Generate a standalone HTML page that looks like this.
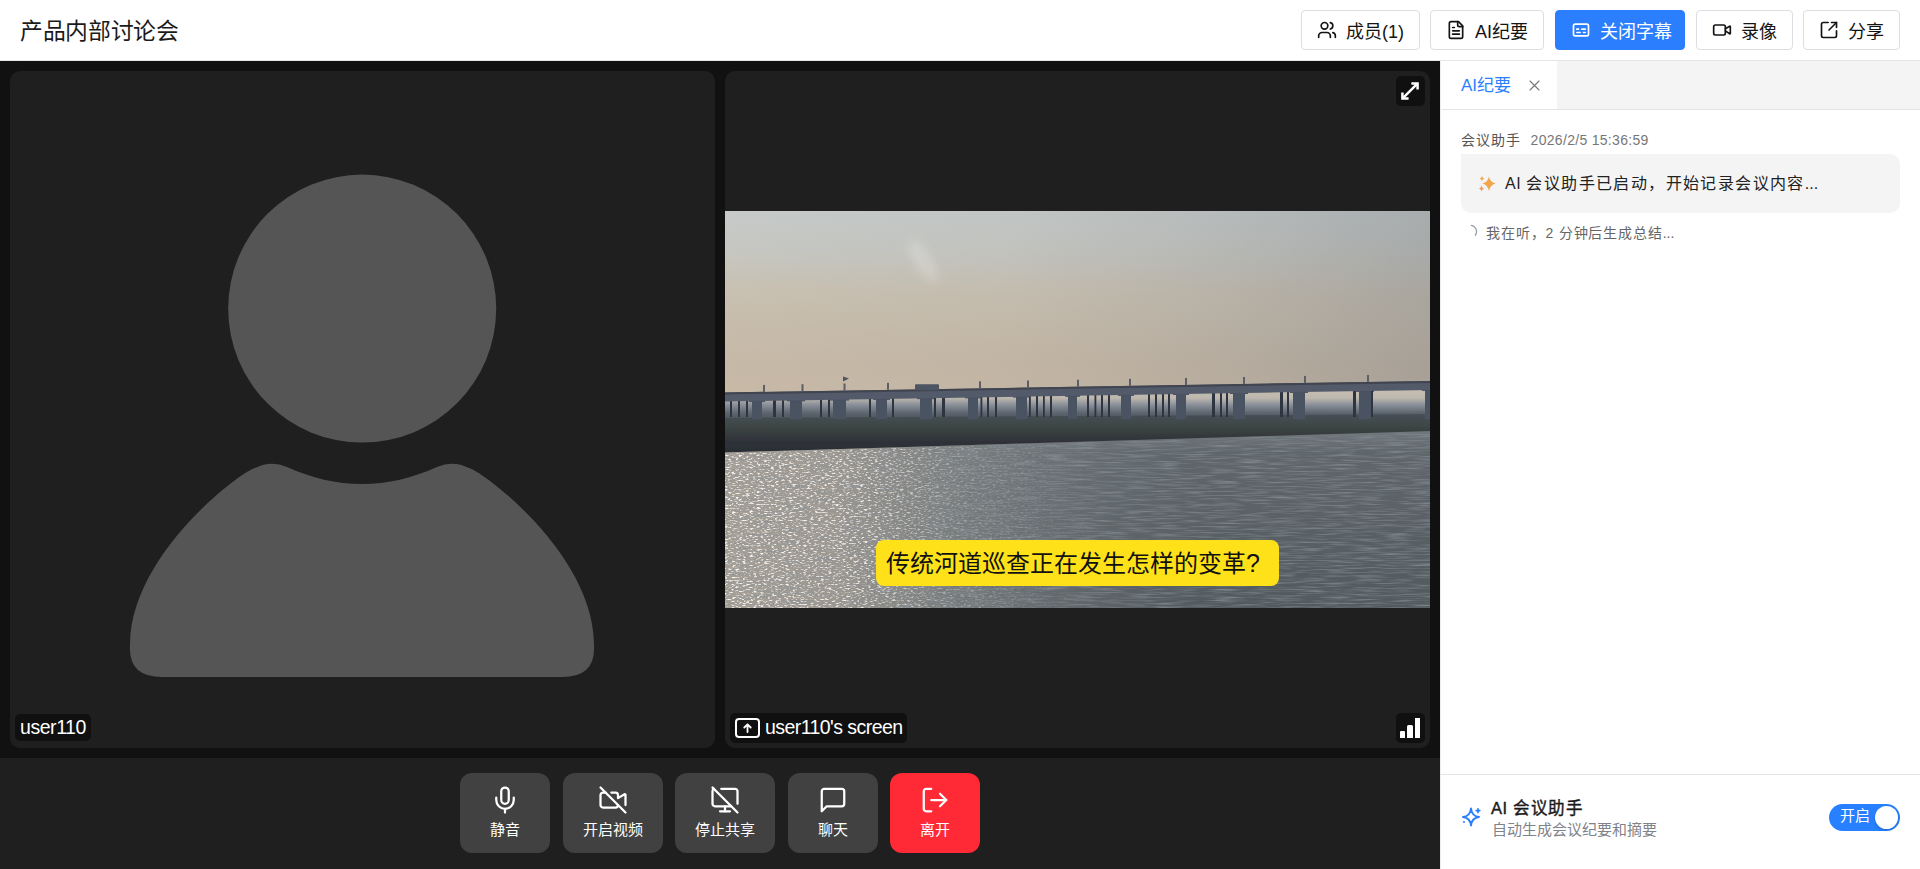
<!DOCTYPE html>
<html lang="zh-CN"><head><meta charset="utf-8">
<style>
*{box-sizing:border-box;margin:0;padding:0}
html,body{width:1920px;height:869px;overflow:hidden;background:#fff;font-family:"Liberation Sans",sans-serif}
.abs{position:absolute}
#header{left:0;top:0;width:1920px;height:61px;background:#fff;border-bottom:1px solid #e6e6ea}
#title{left:20px;top:15px;letter-spacing:-0.35px;font-size:22.8px;color:#1a1a1a;line-height:32px;white-space:nowrap}
.hbtn{top:10px;height:40px;border:1px solid #dddde3;border-radius:4px;background:#fff;color:#141414;font-size:18px;display:flex;align-items:center;padding:0 15px;white-space:nowrap}
.hbtn span{position:relative;top:0}
.hbtn svg{width:20px;height:20px;margin-right:9px;flex:none}
.hbtn.blue{background:#2b7fff;border-color:#2b7fff;color:#fff}
#main{left:0;top:61px;width:1440px;height:697px;background:#111}
.tile{top:71px;width:705px;height:677px;background:#1f1f1f;border-radius:10px;overflow:hidden}
#ctrl{left:0;top:758px;width:1440px;height:111px;background:#1f1f1f}
.cbtn{top:773px;height:80px;border-radius:12px;background:#414141;color:#fff;font-size:15px;text-align:center}
.cbtn svg{position:absolute;left:50%;top:12px;width:30px;height:30px;margin-left:-15px}
.cbtn span{position:absolute;left:0;right:0;top:48px;line-height:18px}
#side{left:1440px;top:61px;width:480px;height:808px;background:#fff}
</style></head><body>
<div id="header" class="abs"></div>
<div id="title" class="abs">产品内部讨论会</div>

<div class="hbtn abs" style="left:1301px;width:119px">
<svg viewBox="0 0 24 24" fill="none" stroke="#141414" stroke-width="2" stroke-linecap="round" stroke-linejoin="round"><path d="M16 21v-2a4 4 0 0 0-4-4H6a4 4 0 0 0-4 4v2"/><circle cx="9" cy="7" r="4"/><path d="M22 21v-2a4 4 0 0 0-3-3.87"/><path d="M16 3.13a4 4 0 0 1 0 7.75"/></svg><span>成员(1)</span></div>
<div class="hbtn abs" style="left:1430px;width:114px">
<svg viewBox="0 0 24 24" fill="none" stroke="#141414" stroke-width="2" stroke-linecap="round" stroke-linejoin="round"><path d="M15 2H6a2 2 0 0 0-2 2v16a2 2 0 0 0 2 2h12a2 2 0 0 0 2-2V7Z"/><path d="M14 2v4a2 2 0 0 0 2 2h4"/><line x1="16" y1="13" x2="8" y2="13"/><line x1="16" y1="17" x2="8" y2="17"/><line x1="10" y1="9" x2="8" y2="9"/></svg><span>AI纪要</span></div>
<div class="hbtn abs blue" style="left:1555px;width:130px">
<svg viewBox="0 0 24 24" fill="none" stroke="#fff" stroke-width="2" stroke-linecap="round" stroke-linejoin="round"><rect x="3" y="5" width="18" height="14" rx="2" ry="2"/><path d="M7 15h4M15 15h2M7 11h2M13 11h4"/></svg><span>关闭字幕</span></div>
<div class="hbtn abs" style="left:1696px;width:97px">
<svg viewBox="0 0 24 24" fill="none" stroke="#141414" stroke-width="2" stroke-linecap="round" stroke-linejoin="round"><path d="m16 13 5.223 3.482a.5.5 0 0 0 .777-.416V7.87a.5.5 0 0 0-.752-.432L16 10.5"/><rect x="2" y="6" width="14" height="12" rx="2"/></svg><span>录像</span></div>
<div class="hbtn abs" style="left:1803px;width:97px">
<svg viewBox="0 0 24 24" fill="none" stroke="#141414" stroke-width="2" stroke-linecap="round" stroke-linejoin="round"><path d="M21 13v6a2 2 0 0 1-2 2H5a2 2 0 0 1-2-2V5a2 2 0 0 1 2-2h6"/><path d="m21 3-9 9"/><path d="M15 3h6v6"/></svg><span>分享</span></div>

<div id="main" class="abs"></div>
<div class="tile abs" style="left:10px"></div>
<div class="tile abs" style="left:725px"></div>
<div id="video"></div><svg class="abs" style="left:725px;top:211px" width="705" height="397" viewBox="0 0 705 397">
<defs>
<linearGradient id="sky" x1="0" y1="0" x2="0" y2="1">
<stop offset="0" stop-color="#c6cac9"/>
<stop offset="0.1" stop-color="#c6c7c2"/>
<stop offset="0.21" stop-color="#c8c0b1"/>
<stop offset="0.39" stop-color="#c6b8a6"/>
<stop offset="0.5" stop-color="#c9baa7"/>
</linearGradient>
<linearGradient id="haze" x1="0" y1="0" x2="0" y2="1">
<stop offset="0" stop-color="#c8bfb1"/>
<stop offset="0.3" stop-color="#bdb7ae"/>
<stop offset="0.52" stop-color="#8a9099"/>
<stop offset="0.78" stop-color="#5e666f"/>
<stop offset="1" stop-color="#4c545b"/>
</linearGradient>
<linearGradient id="land" x1="0" y1="0" x2="0" y2="1">
<stop offset="0" stop-color="#465056"/>
<stop offset="0.3" stop-color="#3e4645"/>
<stop offset="0.65" stop-color="#30343a"/>
<stop offset="1" stop-color="#2a2d33"/>
</linearGradient>
<linearGradient id="water" x1="0" y1="0" x2="0" y2="1">
<stop offset="0" stop-color="#70787c"/>
<stop offset="0.12" stop-color="#5f666b"/>
<stop offset="1" stop-color="#535a5e"/>
</linearGradient>
<linearGradient id="spark" x1="0" y1="0" x2="1" y2="0">
<stop offset="0" stop-color="#a9a298" stop-opacity="0.95"/>
<stop offset="0.16" stop-color="#a59e95" stop-opacity="0.9"/>
<stop offset="0.33" stop-color="#8f918f" stop-opacity="0.55"/>
<stop offset="0.5" stop-color="#80868a" stop-opacity="0.25"/>
<stop offset="0.68" stop-color="#6f777a" stop-opacity="0"/>
</linearGradient>
<linearGradient id="sparkmask" x1="0" y1="0" x2="1" y2="0">
<stop offset="0" stop-color="#fff" stop-opacity="1"/>
<stop offset="0.2" stop-color="#fff" stop-opacity="0.85"/>
<stop offset="0.33" stop-color="#fff" stop-opacity="0.3"/>
<stop offset="0.48" stop-color="#fff" stop-opacity="0.06"/>
<stop offset="0.6" stop-color="#fff" stop-opacity="0"/>
</linearGradient>
<mask id="sm"><rect width="705" height="397" fill="url(#sparkmask)"/></mask>
<filter id="noise" x="0" y="0" width="100%" height="100%">
<feTurbulence type="fractalNoise" baseFrequency="0.28 0.75" numOctaves="2" seed="7"/>
<feColorMatrix type="matrix" values="0 0 0 0 1  0 0 0 0 0.98  0 0 0 0 0.94  4.5 0 0 0 -2.35"/>
</filter>
<filter id="noiseD" x="0" y="0" width="100%" height="100%">
<feTurbulence type="fractalNoise" baseFrequency="0.3 0.8" numOctaves="2" seed="19"/>
<feColorMatrix type="matrix" values="0 0 0 0 0.35  0 0 0 0 0.35  0 0 0 0 0.36  4 0 0 0 -2.25"/>
</filter>
<filter id="noise2" x="0" y="0" width="100%" height="100%">
<feTurbulence type="fractalNoise" baseFrequency="0.035 0.65" numOctaves="2" seed="11"/>
<feColorMatrix type="matrix" values="0 0 0 0 0.25  0 0 0 0 0.28  0 0 0 0 0.31  0 0 0 1.8 -0.78"/>
</filter>
<linearGradient id="vign" x1="0" y1="0" x2="1" y2="0">
<stop offset="0" stop-color="#6a7078" stop-opacity="0"/>
<stop offset="0.4" stop-color="#6a7078" stop-opacity="0.05"/>
<stop offset="0.7" stop-color="#6a7078" stop-opacity="0.17"/>
<stop offset="1" stop-color="#6a7078" stop-opacity="0.33"/>
</linearGradient>
<filter id="glow" x="-100%" y="-100%" width="300%" height="300%"><feGaussianBlur stdDeviation="5"/></filter>
<filter id="soft"><feGaussianBlur stdDeviation="0.55"/></filter>
</defs>
<g filter="url(#soft)">
<rect x="-2" y="-2" width="709" height="401" fill="url(#sky)"/>
<rect x="-2" y="-2" width="709" height="200" fill="url(#vign)"/>
<polygon points="-2,189.5 707,177.8675 707,204.5 -2,208.5" fill="url(#haze)"/>
<polygon points="-2,207 707,203 707,220.9975 -2,242.5" fill="url(#land)"/>
<polygon points="-2,241.5 707,219.9975 707,399 -2,399" fill="url(#water)"/>
<polygon points="-2,241.5 707,219.9975 707,399 -2,399" fill="url(#spark)"/>
<ellipse cx="198" cy="50" rx="9" ry="24" transform="rotate(-32 198 50)" fill="#fff" opacity="0.2" filter="url(#glow)"/>
</g>
<clipPath id="wc"><polygon points="0,242.5 705,220.9975 705,397 0,397"/></clipPath>
<g clip-path="url(#wc)"><rect x="0" y="215" width="705" height="185" filter="url(#noise2)"/><g mask="url(#sm)"><rect x="0" y="215" width="705" height="185" filter="url(#noiseD)" opacity="0.8"/><rect x="0" y="215" width="705" height="185" filter="url(#noise)" opacity="0.95"/></g></g>
<g filter="url(#soft)">
<rect x="27" y="187.0" width="10" height="21.0" fill="#4a5262"/>
<rect x="24" y="187.0" width="16" height="4" fill="#4a5262"/>
<rect x="65" y="186.3" width="12" height="21.7" fill="#4a5262"/>
<rect x="62" y="186.3" width="18" height="4" fill="#4a5262"/>
<rect x="108" y="185.6" width="13" height="22.4" fill="#4a5262"/>
<rect x="105" y="185.6" width="19" height="4" fill="#4a5262"/>
<rect x="151" y="184.9" width="11" height="23.1" fill="#4a5262"/>
<rect x="148" y="184.9" width="17" height="4" fill="#4a5262"/>
<rect x="195" y="184.2" width="12" height="23.8" fill="#4a5262"/>
<rect x="192" y="184.2" width="18" height="4" fill="#4a5262"/>
<rect x="243" y="183.4" width="10" height="24.6" fill="#4a5262"/>
<rect x="240" y="183.4" width="16" height="4" fill="#4a5262"/>
<rect x="291" y="182.6" width="11" height="25.4" fill="#4a5262"/>
<rect x="288" y="182.6" width="17" height="4" fill="#4a5262"/>
<rect x="343" y="181.8" width="9" height="26.2" fill="#4a5262"/>
<rect x="340" y="181.8" width="15" height="4" fill="#4a5262"/>
<rect x="396" y="180.9" width="10" height="27.1" fill="#4a5262"/>
<rect x="393" y="180.9" width="16" height="4" fill="#4a5262"/>
<rect x="451" y="180.0" width="10" height="28.0" fill="#4a5262"/>
<rect x="448" y="180.0" width="16" height="4" fill="#4a5262"/>
<rect x="508" y="179.0" width="12" height="29.0" fill="#4a5262"/>
<rect x="505" y="179.0" width="18" height="4" fill="#4a5262"/>
<rect x="568" y="178.0" width="12" height="30.0" fill="#4a5262"/>
<rect x="565" y="178.0" width="18" height="4" fill="#4a5262"/>
<rect x="634" y="176.9" width="12" height="31.1" fill="#4a5262"/>
<rect x="631" y="176.9" width="18" height="4" fill="#4a5262"/>
<rect x="700" y="175.9" width="5" height="32.1" fill="#4a5262"/>
<rect x="697" y="175.9" width="11" height="4" fill="#4a5262"/>
<rect x="5" y="187.4" width="2" height="18.6" fill="#2e3440"/>
<rect x="13" y="187.3" width="2" height="18.7" fill="#2e3440"/>
<rect x="21" y="187.1" width="2" height="18.9" fill="#2e3440"/>
<rect x="48" y="186.7" width="3" height="19.3" fill="#2e3440"/>
<rect x="57" y="186.5" width="2" height="19.5" fill="#2e3440"/>
<rect x="95" y="185.9" width="2" height="20.1" fill="#2e3440"/>
<rect x="103" y="185.8" width="2" height="20.2" fill="#2e3440"/>
<rect x="144" y="185.1" width="2" height="20.9" fill="#2e3440"/>
<rect x="167" y="184.7" width="2" height="21.3" fill="#2e3440"/>
<rect x="209" y="184.0" width="2" height="22.0" fill="#2e3440"/>
<rect x="217" y="183.9" width="3" height="22.1" fill="#2e3440"/>
<rect x="255.5" y="183.3" width="1.8" height="22.7" fill="#2e3440"/>
<rect x="262" y="183.2" width="2" height="22.8" fill="#2e3440"/>
<rect x="270" y="183.0" width="2" height="23.0" fill="#2e3440"/>
<rect x="304" y="182.5" width="1.8" height="23.5" fill="#2e3440"/>
<rect x="311" y="182.4" width="2" height="23.6" fill="#2e3440"/>
<rect x="318" y="182.2" width="1.8" height="23.8" fill="#2e3440"/>
<rect x="325" y="182.1" width="2" height="23.9" fill="#2e3440"/>
<rect x="362" y="181.5" width="2" height="24.5" fill="#2e3440"/>
<rect x="369.5" y="181.4" width="1.8" height="24.6" fill="#2e3440"/>
<rect x="376" y="181.3" width="2" height="24.7" fill="#2e3440"/>
<rect x="383" y="181.2" width="2" height="24.8" fill="#2e3440"/>
<rect x="423" y="180.5" width="2" height="25.5" fill="#2e3440"/>
<rect x="430" y="180.4" width="2" height="25.6" fill="#2e3440"/>
<rect x="437" y="180.3" width="2" height="25.7" fill="#2e3440"/>
<rect x="443" y="180.2" width="2" height="25.8" fill="#2e3440"/>
<rect x="487" y="179.4" width="3" height="26.6" fill="#2e3440"/>
<rect x="495" y="179.3" width="2" height="26.7" fill="#2e3440"/>
<rect x="501" y="179.2" width="2" height="26.8" fill="#2e3440"/>
<rect x="555" y="178.3" width="3" height="27.7" fill="#2e3440"/>
<rect x="562" y="178.2" width="2" height="27.8" fill="#2e3440"/>
<rect x="628" y="177.1" width="3" height="28.9" fill="#2e3440"/>
<rect x="646" y="176.8" width="2" height="29.2" fill="#2e3440"/>
<polygon points="-2,181.5 707,169.9 707,178.9 -2,190.5" fill="#535a6a"/>
<polygon points="-2,181.5 707,169.9 707,171.9 -2,183.5" fill="#40444f"/>
<rect x="38" y="173.9" width="2" height="7" fill="#5b5f66"/>
<rect x="76.5" y="173.2" width="2" height="7" fill="#5b5f66"/>
<rect x="118.5" y="172.5" width="2" height="7" fill="#5b5f66"/>
<rect x="162" y="171.8" width="2" height="7" fill="#5b5f66"/>
<rect x="254" y="170.3" width="2" height="7" fill="#5b5f66"/>
<rect x="302" y="169.5" width="2" height="7" fill="#5b5f66"/>
<rect x="352" y="168.7" width="2" height="7" fill="#5b5f66"/>
<rect x="404" y="167.8" width="2" height="7" fill="#5b5f66"/>
<rect x="460" y="166.9" width="2" height="7" fill="#5b5f66"/>
<rect x="518" y="166.0" width="2" height="7" fill="#5b5f66"/>
<rect x="579" y="164.9" width="2" height="7" fill="#5b5f66"/>
<rect x="642" y="163.9" width="2" height="7" fill="#5b5f66"/>
<rect x="190" y="173.2" width="24" height="6" rx="1" fill="#4e5462"/>
<path d="M118 165.6 l6 2 l-6 3z" fill="#50545c"/>
</g></svg>
<div class="abs" style="left:876px;top:540px;width:403px;height:46px;background:#ffe11a;border-radius:8px"></div>
<div class="abs" style="left:886px;top:540px;height:46px;line-height:46px;font-size:24px;font-weight:350;color:#111;white-space:nowrap">传统河道巡查正在发生怎样的变革<span style="font-size:25px">?</span></div>

<svg class="abs" style="left:0;top:0" width="1440" height="869" viewBox="0 0 1440 869">
<circle cx="362.2" cy="308.6" r="134" fill="#555555"/>
<path fill="#555555" d="M130 645 C130 555 240 472 255 468 Q271 460 287 467 C312 478 336 484 362 484 C388 484 412 478 437 467 Q453 460 469 468 C484 472 594 555 594 645 Q596 677 562 677 L162 677 Q128 677 130 645 Z"/>
</svg>
<div class="abs" style="left:15px;top:714px;width:76px;height:27px;background:#101010;border-radius:5px"></div>
<div class="abs" style="left:20px;top:714px;height:27px;line-height:27px;font-size:19.5px;letter-spacing:-0.45px;color:#fff">user110</div>

<div class="abs" style="left:1396px;top:76px;width:29px;height:30px;background:#101010;border-radius:5px"></div>
<svg class="abs" style="left:1397px;top:78px" width="26" height="26" viewBox="0 0 24 24" fill="none" stroke="#fff" stroke-width="2.3" stroke-linecap="butt" stroke-linejoin="miter"><polyline points="13.3 5 19 5 19 10.7"/><polyline points="10.7 19 5 19 5 13.3"/><line x1="18.6" y1="5.4" x2="5.4" y2="18.6"/></svg>

<div class="abs" style="left:730px;top:713px;width:177px;height:30px;background:#101010;border-radius:5px"></div>
<svg class="abs" style="left:735px;top:718px" width="25" height="20" viewBox="0 0 25 20" fill="none" stroke="#fff" stroke-width="2"><rect x="1" y="1" width="23" height="18" rx="3"/><path d="M12.5 14V6.5M9.3 9.5l3.2-3.2 3.2 3.2" stroke-width="1.8" stroke-linecap="round" stroke-linejoin="round"/></svg>
<div class="abs" style="left:765px;top:713px;height:29px;line-height:29px;font-size:19.5px;letter-spacing:-0.56px;color:#fff">user110's screen</div>

<div class="abs" style="left:1396px;top:713px;width:29px;height:30px;background:#101010;border-radius:5px"></div>
<div class="abs" style="left:1400px;top:731px;width:5px;height:7px;background:#fff;border-radius:1px 1px 0 0"></div>
<div class="abs" style="left:1407px;top:725px;width:6px;height:13px;background:#fff;border-radius:1.5px 1.5px 0 0"></div>
<div class="abs" style="left:1415px;top:718px;width:5px;height:20px;background:#fff"></div>


<div id="ctrl" class="abs"></div>
<div class="cbtn abs" style="left:460px;width:90px"><svg viewBox="0 0 24 24" fill="none" stroke="#fff" stroke-width="1.8" stroke-linecap="round" stroke-linejoin="round"><path d="M12 2a3 3 0 0 0-3 3v7a3 3 0 0 0 6 0V5a3 3 0 0 0-3-3Z"/><path d="M19 10v2a7 7 0 0 1-14 0v-2"/><line x1="12" x2="12" y1="19" y2="22"/></svg><span>静音</span></div>
<div class="cbtn abs" style="left:563px;width:100px"><svg viewBox="0 0 24 24" fill="none" stroke="#fff" stroke-width="1.8" stroke-linecap="round" stroke-linejoin="round"><path d="M10.66 6H14a2 2 0 0 1 2 2v2.5l5.248-3.062A.5.5 0 0 1 22 7.87v8.196"/><path d="M16 16a2 2 0 0 1-2 2H4a2 2 0 0 1-2-2V8a2 2 0 0 1 2-2h2"/><path d="m2 2 20 20"/></svg><span>开启视频</span></div>
<div class="cbtn abs" style="left:675px;width:100px"><svg viewBox="0 0 24 24" fill="none" stroke="#fff" stroke-width="1.8" stroke-linecap="round" stroke-linejoin="round"><path d="M17 17H4a2 2 0 0 1-2-2V5c0-1.5 1-2 1-2"/><path d="M22 15V5a2 2 0 0 0-2-2H9"/><path d="M8 21h8"/><path d="M12 17v4"/><path d="m2 2 20 20"/></svg><span>停止共享</span></div>
<div class="cbtn abs" style="left:788px;width:90px"><svg viewBox="0 0 24 24" fill="none" stroke="#fff" stroke-width="1.8" stroke-linecap="round" stroke-linejoin="round"><path d="M21 15a2 2 0 0 1-2 2H7l-4 4V5a2 2 0 0 1 2-2h14a2 2 0 0 1 2 2z"/></svg><span>聊天</span></div>
<div class="cbtn abs" style="left:890px;width:90px;background:#ff2a35"><svg viewBox="0 0 24 24" fill="none" stroke="#fff" stroke-width="1.8" stroke-linecap="round" stroke-linejoin="round"><path d="M9 21H5a2 2 0 0 1-2-2V5a2 2 0 0 1 2-2h4"/><polyline points="16 17 21 12 16 7"/><line x1="21" x2="9" y1="12" y2="12"/></svg><span>离开</span></div>

<div id="side" class="abs"></div>
<div class="abs" style="left:1440px;top:61px;width:480px;height:49px;background:#f4f4f5;border-bottom:1px solid #e4e4e7"></div>
<div class="abs" style="left:1440px;top:61px;width:117px;height:48px;background:#fff"></div>
<div class="abs" style="left:1440px;top:61px;width:1px;height:808px;background:#ececf0"></div>
<div class="abs" style="left:1461px;top:72px;line-height:28px;font-size:17px;color:#2b7fff;white-space:nowrap">AI纪要</div>
<svg class="abs" style="left:1529px;top:80px" width="11" height="11" viewBox="0 0 11 11" stroke="#7a7a7a" stroke-width="1.15" stroke-linecap="round"><path d="M1 1L10 10M10 1L1 10"/></svg>

<div class="abs" style="left:1461px;top:130px;line-height:20px;font-size:14px;letter-spacing:0.9px;color:#555;white-space:nowrap">会议助手<span style="color:#777;letter-spacing:0.3px;margin-left:10px">2026/2/5 15:36:59</span></div>
<div class="abs" style="left:1461px;top:154px;width:439px;height:59px;background:#f4f4f5;border-radius:0 10px 10px 10px"></div>
<svg class="abs" style="left:1478px;top:175px" width="20" height="18" viewBox="0 0 20 18"><path d="M11 1.5Q12 7 17.5 8.5Q12 10 11 16Q10 10 4.5 8.5Q10 7 11 1.5Z" fill="#f2a649"/><path d="M4 1Q4.4 3.1 6.3 3.6Q4.4 4.1 4 6.3Q3.6 4.1 1.7 3.6Q3.6 3.1 4 1Z" fill="#f2a649"/><path d="M3.5 10.5Q4 13 6.2 13.5Q4 14 3.5 16.5Q3 14 0.8 13.5Q3 13 3.5 10.5Z" fill="#ee9a5a"/></svg>
<div class="abs" style="left:1505px;top:172px;line-height:24px;font-size:16px;letter-spacing:1.4px;color:#222;white-space:nowrap"><span style="letter-spacing:0.6px">AI </span>会议助手已启动，开始记录会议内容<span style="letter-spacing:0">...</span></div>
<svg class="abs" style="left:1465px;top:224px" width="14" height="14" viewBox="0 0 14 14" fill="none" stroke="#9ca1a8" stroke-width="1.2" stroke-linecap="round"><path d="M6.3 1.3A6.5 6.5 0 0 1 10.3 11.5"/></svg>
<div class="abs" style="left:1486px;top:223px;line-height:20px;font-size:14px;letter-spacing:0.85px;color:#666;white-space:nowrap">我在听，2 分钟后生成总结<span style="letter-spacing:0">...</span></div>

<div class="abs" style="left:1440px;top:774px;width:480px;height:1px;background:#e4e4e7"></div>
<svg class="abs" style="left:1460px;top:806px" width="22" height="22" viewBox="0 0 22 22" fill="none" stroke="#2b7fff" stroke-width="2" stroke-linecap="round" stroke-linejoin="round"><path d="M11 2.5Q11.9 10.2 19 11Q11.9 11.8 11 19.5Q10.1 11.8 3 11Q10.1 10.2 11 2.5Z"/><path d="M18 2.8v3.6M16.2 4.6h3.6" stroke-width="1.7"/><circle cx="4" cy="16" r="1" fill="#2b7fff" stroke="none"/></svg>
<div class="abs" style="left:1491px;top:797px;line-height:22px;font-size:16.5px;letter-spacing:0.6px;color:#1a1a1a;-webkit-text-stroke:0.4px #1a1a1a;white-space:nowrap">AI 会议助手</div>
<div class="abs" style="left:1492px;top:820px;line-height:20px;font-size:15px;color:#7f838b;white-space:nowrap">自动生成会议纪要和摘要</div>
<div class="abs" style="left:1829px;top:804px;width:71px;height:27px;background:#2680ff;border-radius:14px"></div>
<div class="abs" style="left:1840px;top:802px;line-height:27px;font-size:15px;color:#fff;white-space:nowrap">开启</div>
<div class="abs" style="left:1875px;top:806px;width:23px;height:23px;background:#fff;border-radius:50%;box-shadow:0 1px 3px rgba(0,0,0,.2)"></div>

</body></html>
